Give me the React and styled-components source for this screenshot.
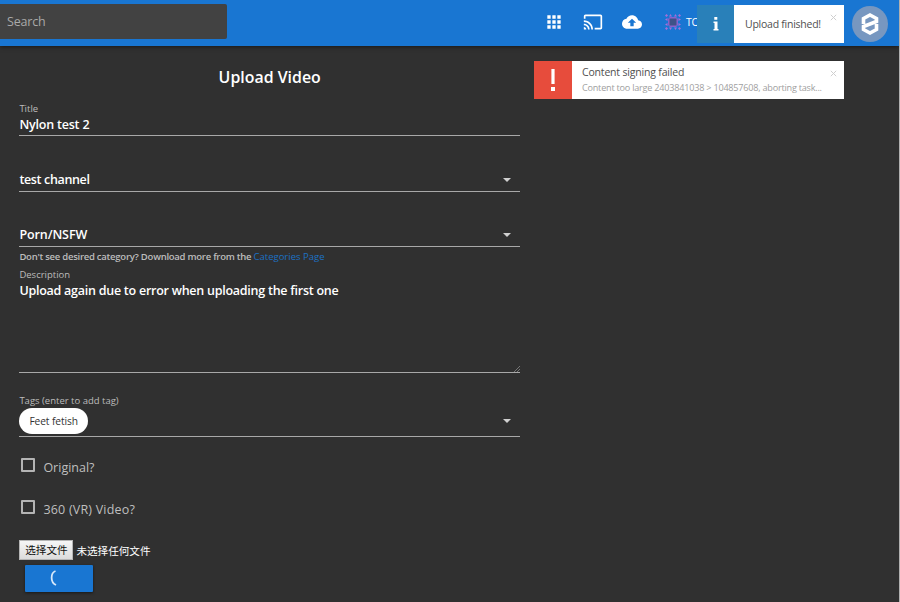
import React from 'react';
import styled, { createGlobalStyle } from 'styled-components';

const Global = createGlobalStyle`
  *, *::before, *::after { box-sizing: border-box; }
  body { margin: 0; background: #303030; overflow: hidden; }
`;
const Page = styled.div`
  position: relative;
  width: 900px;
  height: 602px;
  overflow: hidden;
  background: #303030;
  border-right: 1px solid #b0b0b0;
  color: #fff;
  font-family: "Open Sans", "Noto Sans", "Noto Sans CJK SC", sans-serif;
`;
const Header = styled.header`
  display: flex;
  align-items: flex-start;
  height: 46px;
  background: #1976d2;
  box-shadow: 0 1px 4px rgba(0, 0, 0, 0.5);
`;
const Search = styled.div`
  width: 227px;
  height: 35px;
  margin-top: 4px;
  padding-left: 7px;
  border-radius: 0 2px 2px 0;
  background: #424242;
  color: #a9a9a9;
  font-size: 12.5px;
  line-height: 36px;
  letter-spacing: -0.2px;
`;
const Actions = styled.nav`
  display: flex;
  align-items: center;
  height: 44px;
  margin-left: 317px;
  gap: 19px;
`;
const Glyph = styled.svg`
  display: block;
  flex: none;
  width: ${p => p.$w}px;
  height: ${p => p.$h || p.$w}px;
`;
const User = styled.div`
  display: flex;
  align-items: center;
  gap: 5px;
  margin-left: 4px;
  font-size: 10.5px;
  letter-spacing: -0.2px;
`;
const Avatar = styled.div`
  display: grid;
  place-items: center;
  width: 36px;
  height: 36px;
  margin: 6px 11px 0 auto;
  border-radius: 50%;
  background: #7797c0;
`;
const Form = styled.main`
  display: flex;
  flex-direction: column;
  width: 500.6px;
  margin-left: 19.4px;
`;
const Heading = styled.h1`
  height: 20px;
  margin: 21px 0 15px;
  font-size: 15.9px;
  line-height: 20px;
  font-weight: 600;
  text-align: center;
`;
const Field = styled.div`
  height: ${p => p.$h}px;
  margin-top: ${p => p.$gap || 0}px;
  border-bottom: 1px solid #a8a8a8;
  position: relative;
`;
const Label = styled.div`
  height: 13px;
  color: #bcbcbc;
  font-size: 9.5px;
  line-height: 13px;
`;
const Value = styled.div`
  display: flex;
  align-items: center;
  justify-content: space-between;
  height: 20px;
  padding-right: 9px;
  font-size: 12.5px;
  font-weight: 600;
  line-height: ${p => p.$lh || 18}px;
  letter-spacing: ${p => p.$ls || 0}px;
`;
const Caret = styled.i`
  border: 4px solid transparent;
  border-top-color: #d0d0d0;
  border-bottom: 0;
`;
const Hint = styled.div`
  height: 21px;
  color: #bcbcbc;
  font-size: 9.5px;
  font-weight: 600;
  line-height: 20px;
  letter-spacing: -0.25px;
`;
const Link = styled.a`
  color: #1c70c4;
  font-weight: 400;
  letter-spacing: 0;
`;
const Grip = styled(Glyph)`
  position: absolute;
  right: 0;
  bottom: 0;
`;
const TagRow = styled.div`
  display: flex;
  align-items: center;
  justify-content: space-between;
  height: 27px;
  padding-right: 9px;
`;
const Chip = styled.span`
  height: 26px;
  padding: 0 10px;
  border-radius: 13px;
  background: #fff;
  color: #333;
  font-size: 10.2px;
  line-height: 27px;
  letter-spacing: -0.08px;
`;
const Check = styled.label`
  display: flex;
  align-items: center;
  height: 20px;
  margin-top: ${p => p.$gap}px;
  padding-left: 2px;
  gap: 8px;
  color: #bfbfbf;
  font-size: 12.5px;
  font-weight: 500;
  letter-spacing: ${p => p.$ls || 0}px;
`;
const Box = styled.span`
  width: 14px;
  height: 14px;
  margin-top: -4px;
  border: 2px solid #b4b4b4;
  border-radius: 1px;
`;
const FileRow = styled.div`
  display: flex;
  align-items: center;
  height: 20px;
  margin-top: 21px;
  gap: 3px;
  font-family: "Noto Sans CJK SC", sans-serif;
  font-size: 10.6px;
`;
const FileButton = styled.span`
  width: 54px;
  height: 20px;
  border: 1px solid #b5b5b5;
  background: linear-gradient(#f6f6f6, #dcdcdc);
  color: #111;
  line-height: 18px;
  text-align: center;
`;
const Submit = styled.button`
  display: grid;
  place-items: center;
  width: 68px;
  height: 27px;
  margin: 4.5px 0 0 6px;
  padding: 0 8px 0 0;
  border: 0;
  border-radius: 1px;
  background: #1976d2;
  box-shadow: 0 1px 3px rgba(0, 0, 0, 0.5);
`;
const Toasts = styled.aside`
  position: absolute;
  top: 5px;
  right: 55px;
  display: flex;
  flex-direction: column;
  align-items: flex-end;
  gap: 18px;
`;
const Toast = styled.div`
  position: relative;
  display: flex;
  width: ${p => p.$w}px;
  height: 38px;
  background: #fff;
`;
const ToastIcon = styled.div`
  display: grid;
  place-items: center;
  width: ${p => p.$w}px;
  background: ${p => p.$bg};
`;
const ToastBody = styled.div`
  display: flex;
  flex: 1;
  flex-direction: column;
  justify-content: center;
  padding-left: ${p => p.$pad}px;
  white-space: nowrap;
`;
const ToastTitle = styled.div`
  color: #505050;
  font-size: 10.5px;
  line-height: 15px;
  letter-spacing: ${p => p.$ls || 0}px;
`;
const ToastText = styled.div`
  color: #a0a0a0;
  font-size: 9.1px;
  line-height: 15px;
  letter-spacing: -0.22px;
`;
const Close = styled(Glyph)`
  position: absolute;
  top: 9px;
  right: 7px;
`;

const CloseIcon = () => (
  <Close $w={7} viewBox="0 0 7 7"><path d="M.8.8l5.4 5.4M6.2.8L.8 6.2" stroke="#cfcfcf" strokeWidth="1" /></Close>
);

export default function App() {
  return (
    <Page>
      <Global />
      <Header>
        <Search>Search</Search>
        <Actions>
          <Glyph $w={20} viewBox="0 0 24 24" fill="#fff"><path d="M4 8h4V4H4v4zm6 12h4v-4h-4v4zm-6 0h4v-4H4v4zm0-6h4v-4H4v4zm6 0h4v-4h-4v4zm6-10v4h4V4h-4zm-6 4h4V4h-4v4zm6 6h4v-4h-4v4zm0 6h4v-4h-4v4z" /></Glyph>
          <Glyph $w={20} viewBox="0 0 24 24" fill="#fff"><path d="M21 3H3c-1.100 0-2 .9-2 2v3h2V5h18v14h-7v2h7c1.100 0 2-.9 2-2V5c0-1.100-.9-2-2-2zM1 18v3h3c0-1.660-1.340-3-3-3zm0-4v2c2.760 0 5 2.240 5 5h2c0-3.870-3.130-7-7-7zm0-4v2c4.970 0 9 4.030 9 9h2c0-6.080-4.930-11-11-11z" /></Glyph>
          <Glyph $w={20} viewBox="0 0 24 24" fill="#fff"><path d="M19.350 10.040C18.670 6.590 15.640 4 12 4 9.110 4 6.600 5.640 5.350 8.040 2.340 8.360 0 10.910 0 14c0 3.310 2.690 6 6 6h13c2.760 0 5-2.240 5-5 0-2.640-2.050-4.780-4.650-4.960zM14 13v4h-4v-4H7l5-5 5 5h-3z" /></Glyph>
          <User>
            <Glyph $w={16} viewBox="0 0 16 16">
              <path fill="#a56fd8" d="M1.500 0L3 1.500 1.500 3 0 1.500zM14.500 0L16 1.500 14.500 3 13 1.500zM1.500 13L3 14.500 1.500 16 0 14.500zM14.500 13l1.500 1.500-1.500 1.500-1.500-1.500zM4 2.500L5.500 0 7 2.500zM9 2.500L10.500 0 12 2.500zM4 13.500L5.500 16 7 13.500zM9 13.500l1.500 2.500 1.500-2.500zM2.500 4L0 5.500 2.500 7zM2.500 9L0 10.500 2.500 12zM13.500 4L16 5.500 13.500 7zM13.500 9l2.500 1.500-2.500 1.500z" />
              <path fill="#8a62cc" d="M5 3h6l2 2v6l-2 2H5l-2-2V5z" />
              <path fill="#3f5288" d="M4.500 4.500h7v7h-7z" />
            </Glyph>
            TOP
          </User>
        </Actions>
        <Avatar>
          <Glyph $w={18} $h={24} viewBox="0 0 18 24" fill="none" stroke="#fff" strokeWidth="3.600">
            <path d="M2.500 12V6.500L9 3l6.500 3.500V9.500L2.500 14.500v3L9 21l6.500-3.500V12" />
          </Glyph>
        </Avatar>
      </Header>
      <Form>
        <Heading>Upload Video</Heading>
        <Field $h={34}><Label>Title</Label><Value $ls={-0.2}>Nylon test 2</Value></Field>
        <Field $h={22} $gap={34}><Value $ls={-0.35}>test channel<Caret /></Value></Field>
        <Field $h={22} $gap={33}><Value $ls={-0.1} $lh={20}>Porn/NSFW<Caret /></Value></Field>
        <Hint>Don't see desired category? Download more from the <Link>Categories Page</Link></Hint>
        <Field $h={105}>
          <Label>Description</Label>
          <Value $ls={-0.25} $lh={20}>Upload again due to error when uploading the first one</Value>
          <Grip $w={8} viewBox="0 0 8 8"><path d="M2 8l6-6M5 8l3-3" stroke="#888" strokeWidth=".8" /></Grip>
        </Field>
        <Field $h={43} $gap={21}>
          <Label>Tags (enter to add tag)</Label>
          <TagRow><Chip>Feet fetish</Chip><Caret /></TagRow>
        </Field>
        <Check $gap={20}><Box />Original?</Check>
        <Check $gap={22} $ls={0.2}><Box />360 (VR) Video?</Check>
        <FileRow><FileButton>选择文件</FileButton>未选择任何文件</FileRow>
        <Submit>
          <Glyph $w={16} viewBox="0 0 16 16" fill="none" stroke="#d6e8fa" strokeWidth="1.800"><path d="M8.500 1C3.500 3 3 12 9 15" /></Glyph>
        </Submit>
      </Form>
      <Toasts>
        <Toast $w={147}>
          <ToastIcon $w={37} $bg="#2980b9"><Glyph $w={6} $h={14} viewBox="0 0 6 14" fill="#fff"><path d="M1.300 0h3v2.800h-3zM.5 4.500h4V12h1v1.500H.5V12h1V6h-1z" /></Glyph></ToastIcon>
          <ToastBody $pad={11}><ToastTitle $ls={-0.25}>Upload finished!</ToastTitle></ToastBody>
          <CloseIcon />
        </Toast>
        <Toast $w={310}>
          <ToastIcon $w={38} $bg="#e74c3c"><Glyph $w={4} $h={22} viewBox="0 0 4 22" fill="#fff"><path d="M.4 0h3.200v15H.4zM0 18h4v4H0z" /></Glyph></ToastIcon>
          <ToastBody $pad={10}>
            <ToastTitle $ls={-0.18}>Content signing failed</ToastTitle>
            <ToastText>Content too large 2403841038 &gt; 104857608, aborting task...</ToastText>
          </ToastBody>
          <CloseIcon />
        </Toast>
      </Toasts>
    </Page>
  );
}
